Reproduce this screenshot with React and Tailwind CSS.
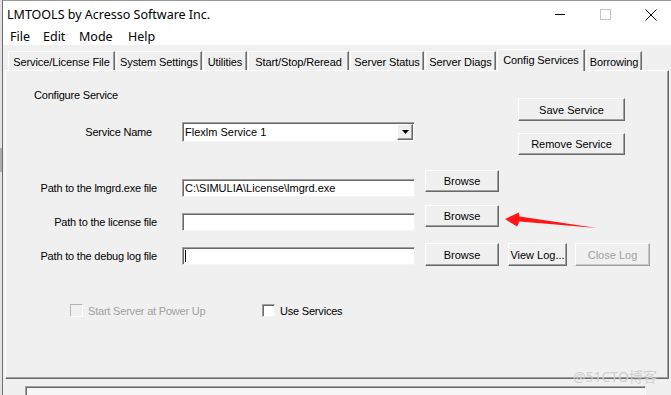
import React from "react";

const btn =
  "flex items-center justify-center bg-[#f0f0f0] border border-t-white border-l-white border-b-[#696969] border-r-[#696969] shadow-[inset_-1px_-1px_0_#a0a0a0] text-black text-[11px] leading-[14px]";
const btnDisabled =
  "flex items-center justify-center bg-[#f0f0f0] border border-t-white border-l-white border-b-[#a0a0a0] border-r-[#a0a0a0] shadow-[inset_-1px_-1px_0_#c8c8c8] text-[#a0a0a0] text-[11px] leading-[14px]";
const field =
  "bg-white border border-t-[#a0a0a0] border-l-[#a0a0a0] border-b-[#f4f4f4] border-r-[#f4f4f4] shadow-[inset_1px_1px_0_#696969]";
const label = "text-right text-[11px] leading-[14px] tracking-[-0.2px] text-black";

function Tab({ w, children }) {
  return (
    <div
      className="shrink-0 h-[19px] flex items-center justify-center pt-[2px] bg-[#f0f0f0] border-t border-l border-t-white border-l-white border-r border-r-[#696969] shadow-[inset_-1px_0_0_#a0a0a0] text-[11px] leading-[14px] tracking-[-0.1px] text-black whitespace-nowrap"
      style={{ width: w }}
    >
      {children}
    </div>
  );
}

function PathRow({ mt, gmt, bh, text, caret, children, labelText }) {
  return (
    <div className="shrink-0 flex items-start" style={{ marginTop: mt }}>
      <div className="flex items-center" style={{ marginTop: gmt }}>
        <div className={`${label} w-[151px]`}>{labelText}</div>
        <div className={`${field} ml-[25px] w-[233px] h-[18px] flex items-center pl-[2px] text-[11px] leading-[14px] text-black whitespace-nowrap overflow-hidden`}>
          {text}
          {caret && <div className="w-px h-[12px] bg-black" />}
        </div>
      </div>
      <div className={`${btn} ml-[10px] w-[74px]`} style={{ height: bh }}>
        Browse
      </div>
      {children}
    </div>
  );
}

export default function App() {
  return (
    <div className="w-[671px] h-[395px] overflow-hidden bg-[#f0f0f0] flex relative font-['Liberation_Sans',Arial,sans-serif]">
      {/* left background strip */}
      <div className="w-[2px] shrink-0 flex flex-col">
        <div className="h-[148px] shrink-0 bg-[#e2e2e2]" />
        <div className="h-[24px] shrink-0 bg-[#ababab]" />
        <div className="flex-1 bg-[#e2e2e2]" />
      </div>
      <div className="w-px shrink-0 bg-[#6e6e6e]" />

      {/* window */}
      <div className="flex-1 flex flex-col min-h-0">
        {/* title bar */}
        <div className="shrink-0 h-[28px] bg-white border-t border-t-[#9a9a9a] flex items-center font-['Noto_Sans',sans-serif]">
          <div className="ml-[4px] text-[12.5px] leading-[16px] text-black whitespace-nowrap">
            LMTOOLS by Acresso Software Inc.
          </div>
          <div className="ml-auto flex items-center">
            <div className="w-[10px] h-px bg-black" />
            <div className="ml-[35px] w-[11px] h-[11px] border border-[#c4c4c4]" />
            <svg className="ml-[34px] mr-[14px]" width="12" height="12" viewBox="0 0 12 12">
              <path d="M0.5 0.5 L11.5 11.5 M11.5 0.5 L0.5 11.5" stroke="#000" strokeWidth="1" fill="none" />
            </svg>
          </div>
        </div>
        {/* menu bar */}
        <div className="shrink-0 h-[17px] bg-white flex items-center font-['Noto_Sans',sans-serif] text-[12.5px] leading-[16px] text-black">
          <div className="ml-[7px] w-[33px]">File</div>
          <div className="w-[36px]">Edit</div>
          <div className="w-[49px]">Mode</div>
          <div>Help</div>
        </div>

        {/* tabs */}
        <div className="shrink-0 h-[25px] flex items-end pl-[5px] gap-[1px]">
          <Tab w={107}>Service/License File</Tab>
          <Tab w={86}>System Settings</Tab>
          <Tab w={44}>Utilities</Tab>
          <Tab w={101}>Start/Stop/Reread</Tab>
          <Tab w={74}>Server Status</Tab>
          <Tab w={71}>Server Diags</Tab>
          <div className="shrink-0 relative z-10 -mb-px w-[88px] h-[22px] flex items-center justify-center pb-[2px] bg-[#f0f0f0] border-t border-l border-t-white border-l-white border-r border-r-[#696969] shadow-[inset_-1px_0_0_#a0a0a0] text-[11px] leading-[14px] tracking-[-0.1px] text-black whitespace-nowrap">
            Config Services
          </div>
          <Tab w={56}>Borrowing</Tab>
        </div>

        {/* panel */}
        <div className="shrink-0 ml-[2px] w-[664px] h-[309px] border border-t-white border-l-white border-b-[#696969] border-r-[#696969] shadow-[inset_-1px_-1px_0_#a0a0a0] flex flex-col">
          {/* top section */}
          <div className="shrink-0 flex">
            <div className="w-[409px] flex flex-col">
              <div className="ml-[28px] mt-[17px] h-[14px] text-[11px] leading-[14px] tracking-[-0.2px] text-black">
                Configure Service
              </div>
              <div className="mt-[20px] flex items-center h-[20px]">
                <div className={`${label} w-[146px]`}>Service Name</div>
                <div className={`${field} ml-[30px] w-[233px] h-[20px] flex items-center pl-[2px] pr-[1px]`}>
                  <div className="flex-1 text-[11px] leading-[14px] text-black">Flexlm Service 1</div>
                  <div className="w-[16px] h-[16px] bg-[#f0f0f0] border border-t-white border-l-white border-b-[#696969] border-r-[#696969] shadow-[inset_-1px_-1px_0_#a0a0a0] flex items-center justify-center">
                    <svg width="7" height="4" viewBox="0 0 7 4">
                      <path d="M0 0 H7 L3.5 4 Z" fill="#000" />
                    </svg>
                  </div>
                </div>
              </div>
            </div>
            <div className="ml-[103px] flex flex-col">
              <div className={`${btn} mt-[27px] w-[107px] h-[23px]`}>Save Service</div>
              <div className={`${btn} mt-[12px] w-[107px] h-[22px]`}>Remove Service</div>
            </div>
          </div>

          <PathRow mt={15} gmt={9} bh={22} labelText="Path to the lmgrd.exe file" text={"C:\\SIMULIA\\License\\lmgrd.exe"} />
          <PathRow mt={8} gmt={8} bh={22} labelText="Path to the license file" text="" />
          <PathRow mt={12} gmt={4} bh={23} labelText="Path to the debug log file" text="" caret>
            <div className={`${btn} ml-[9px] w-[59px] h-[23px]`}>View Log...</div>
            <div className={`${btnDisabled} ml-[8px] w-[75px] h-[23px]`}>Close Log</div>
          </PathRow>

          {/* checkboxes */}
          <div className="shrink-0 mt-[38px] h-[13px] flex items-center">
            <div className="ml-[64px] w-[192px] flex items-center">
              <div className="w-[13px] h-[13px] bg-[#f0f0f0] border border-t-[#b4b4b4] border-l-[#b4b4b4] border-b-white border-r-white" />
              <div className="ml-[5px] text-[11px] leading-[14px] tracking-[-0.2px] text-[#a0a0a0] whitespace-nowrap">
                Start Server at Power Up
              </div>
            </div>
            <div className="w-[13px] h-[13px] bg-white border border-t-[#a0a0a0] border-l-[#a0a0a0] border-b-[#f4f4f4] border-r-[#f4f4f4] shadow-[inset_1px_1px_0_#696969]" />
            <div className="ml-[5px] text-[11px] leading-[14px] tracking-[-0.2px] text-black whitespace-nowrap">
              Use Services
            </div>
          </div>
        </div>

        {/* status box */}
        <div className="shrink-0 mt-[7px] ml-[22px] w-[621px] h-[20px] bg-[#f6f6f6] border-t border-l border-r border-t-[#a0a0a0] border-l-[#a0a0a0] border-r-white shadow-[inset_1px_1px_0_#696969]" />
      </div>

      {/* red annotation arrow */}
      <svg className="absolute left-0 top-0 pointer-events-none" width="671" height="395" viewBox="0 0 671 395">
        <path d="M505 219 L519 212.5 L519.5 216.5 L597 228 L519.5 221.5 L517 226.5 Z" fill="#ff1616" />
      </svg>

      {/* watermark */}
      <div className="absolute left-[573px] top-[368px] text-[14px] leading-[18px] text-[#cfcfcf] font-['Noto_Sans','Noto_Sans_CJK_SC',sans-serif] whitespace-nowrap pointer-events-none">
        @51CTO博客
      </div>
    </div>
  );
}
